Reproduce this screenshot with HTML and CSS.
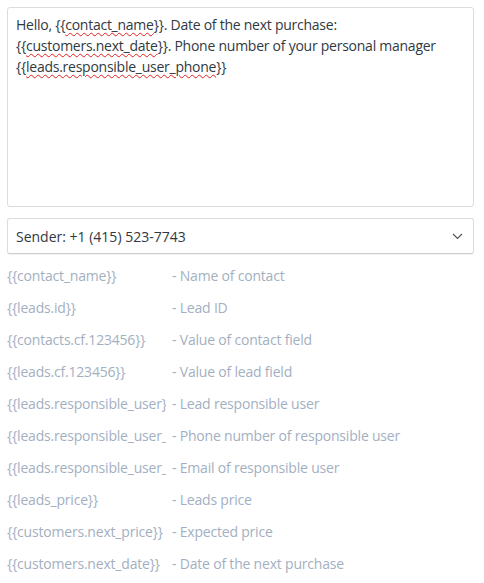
FILE: index.html
```html
<!DOCTYPE html>
<html lang="en">
<head>
    <meta charset="UTF-8">
    <title>Message template</title>
    <link rel="stylesheet" href="styles.css">
</head>
<body>
    <div class="editor">
        <div class="message">
            Hello, {{<span class="typo">contact_name</span>}}. Date of the next purchase:
            {{<span class="typo">customers.next_date</span>}}. Phone number of your personal manager
            {{<span class="typo">leads.responsible_user_phone</span>}}
        </div>

        <div class="sender">
            <span>Sender: +1 (415) 523-7743</span>
            <svg class="chevron" width="11" height="7" viewBox="0 0 11 7">
                <path d="M1 1 L5.5 5.5 L10 1" fill="none" stroke="#555" stroke-width="1.2"/>
            </svg>
        </div>

        <!-- Available markers -->
        <ul class="markers">
            <li><span class="key">{{contact_name}}</span><span class="desc">- Name of contact</span></li>
            <li><span class="key">{{leads.id}}</span><span class="desc">- Lead ID</span></li>
            <li><span class="key">{{contacts.cf.123456}}</span><span class="desc">- Value of contact field</span></li>
            <li><span class="key">{{leads.cf.123456}}</span><span class="desc">- Value of lead field</span></li>
            <li><span class="key">{{leads.responsible_user}}</span><span class="desc">- Lead responsible user</span></li>
            <li><span class="key">{{leads.responsible_user_phone}}</span><span class="desc">- Phone number of responsible user</span></li>
            <li><span class="key">{{leads.responsible_user_email}}</span><span class="desc">- Email of responsible user</span></li>
            <li><span class="key">{{leads_price}}</span><span class="desc">- Leads price</span></li>
            <li><span class="key">{{customers.next_price}}</span><span class="desc">- Expected price</span></li>
            <li><span class="key">{{customers.next_date}}</span><span class="desc">- Date of the next purchase</span></li>
        </ul>
    </div>
</body>
</html>
```

FILE: styles.css
```css
body {
    margin: 0;
    background: #fff;
    font-family: "Open Sans", "Noto Sans", sans-serif;
    font-size: 14px;
}

.editor {
    padding: 7px 10px 0 7px;
}

.message {
    height: 200px;
    box-sizing: border-box;
    padding: 6px 8px;
    border: 1px solid #dcdcdc;
    border-radius: 3px;
    color: #313942;
    line-height: 21px;
    letter-spacing: -0.25px;
}

.typo {
    text-decoration: underline wavy #e02020;
    text-decoration-thickness: 1px;
    text-underline-offset: 2px;
}

.sender {
    display: flex;
    align-items: center;
    justify-content: space-between;
    height: 36px;
    box-sizing: border-box;
    margin-top: 11px;
    padding: 0 10px 0 8px;
    border: 1px solid #dcdcdc;
    border-bottom-color: #cfcfcf;
    border-radius: 3px;
    box-shadow: 0 1px 1px rgba(0, 0, 0, 0.06);
    color: #313942;
}

.markers {
    list-style: none;
    margin: 5px 0 0;
    padding: 0;
    color: #a3b0c1;
    letter-spacing: -0.2px;
}

.markers li {
    display: flex;
    height: 32px;
    align-items: center;
    white-space: nowrap;
}

.key {
    width: 159px;
    margin-right: 6px;
    flex-shrink: 0;
    overflow: hidden;
}
```
